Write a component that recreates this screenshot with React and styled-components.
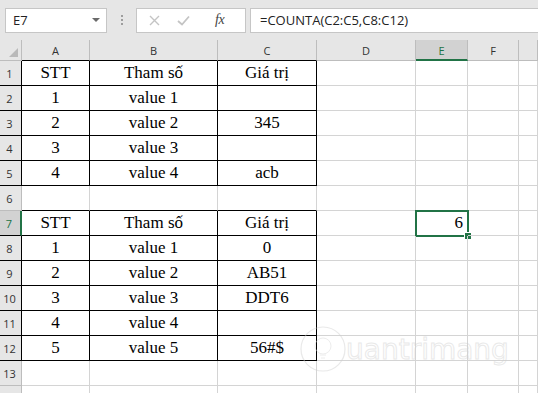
import React from 'react';
import styled, { createGlobalStyle } from 'styled-components';

const GlobalStyle = createGlobalStyle`
  html, body {
    margin: 0;
    padding: 0;
    background: #ffffff;
    overflow: hidden;
  }
  * { box-sizing: border-box; }
`;

const green = '#217346';
const gridLine = '#d4d4d4';

const Window = styled.div`
  position: relative;
  width: 538px;
  height: 393px;
  overflow: hidden;
  background: #ffffff;
  font-family: "Open Sans", "Liberation Sans", sans-serif;
`;

const Toolbar = styled.div`
  display: flex;
  align-items: center;
  height: 40px;
  padding: 0 0 0 5px;
  background: #e6e6e6;
`;

const NameBox = styled.div`
  display: flex;
  align-items: center;
  justify-content: space-between;
  width: 102px;
  height: 25px;
  padding: 0 6px 0 7px;
  background: #ffffff;
  border: 1px solid #c6c6c6;
  font-size: 13px;
  color: #222;
`;

const Caret = styled.span`
  width: 0;
  height: 0;
  border-left: 4px solid transparent;
  border-right: 4px solid transparent;
  border-top: 4px solid #6a6a6a;
`;

const Grip = styled.div`
  display: flex;
  flex-direction: column;
  gap: 2px;
  margin: 0 13px 0 14px;
  span {
    width: 2px;
    height: 2px;
    background: #9d9d9d;
  }
`;

const FxBox = styled.div`
  display: flex;
  align-items: center;
  width: 110px;
  height: 25px;
  padding: 0 0 0 12px;
  background: #ffffff;
  border: 1px solid #c6c6c6;
  gap: 17px;
`;

const FxLabel = styled.span`
  font-family: "Liberation Serif", serif;
  font-style: italic;
  font-size: 14px;
  color: #444;
  margin-left: 8px;
  letter-spacing: -0.5px;
`;

const FormulaInput = styled.div`
  flex: 1;
  display: flex;
  align-items: center;
  height: 25px;
  margin-left: 4px;
  padding-left: 9px;
  background: #ffffff;
  border: 1px solid #c6c6c6;
  border-right: none;
  font-size: 13px;
  color: #222;
`;

const Sheet = styled.div`
  display: grid;
  grid-template-columns: 22px 68px 128px 99px 99px 52px 51px 19px;
  grid-auto-rows: 25px;
  grid-template-rows: 21px;
`;

const ColHead = styled.div`
  display: flex;
  align-items: center;
  justify-content: center;
  background: ${p => (p.$active ? '#d2d2d2' : '#e6e6e6')};
  border-right: 1px solid #bdbdbd;
  border-bottom: ${p => (p.$active ? `2px solid ${green}` : `1px solid ${p.$dark ? '#000' : '#bdbdbd'}`)};
  font-size: 11px;
  color: ${p => (p.$active ? green : '#333')};
  padding-top: ${p => (p.$active ? '1px' : '0')};
`;

const Corner = styled.div`
  position: relative;
  background: #e6e6e6;
  border-right: 1px solid #bdbdbd;
  border-bottom: 1px solid #bdbdbd;
  &::after {
    content: '';
    position: absolute;
    right: 3px;
    bottom: 3px;
    width: 0;
    height: 0;
    border-left: 9px solid transparent;
    border-bottom: 9px solid #b9b9b9;
  }
`;

const RowHead = styled.div`
  display: flex;
  align-items: flex-end;
  justify-content: center;
  padding-bottom: 4px;
  padding-right: 2px;
  background: ${p => (p.$active ? '#d2d2d2' : '#e6e6e6')};
  border-right: ${p => (p.$active ? `2px solid ${green}` : `1px solid ${p.$dark ? '#000' : '#bdbdbd'}`)};
  border-bottom: 1px solid ${p => (p.$dark ? '#000' : '#bdbdbd')};
  font-size: 11px;
  color: ${p => (p.$active ? green : '#333')};
`;

const Cell = styled.div`
  position: relative;
  display: flex;
  align-items: flex-end;
  justify-content: ${p => (p.$align === 'right' ? 'flex-end' : 'center')};
  padding: 0 4px 2px 4px;
  border-right: 1px solid ${p => (p.$darkRight ? '#000' : gridLine)};
  border-bottom: 1px solid ${p => (p.$darkBottom ? '#000' : gridLine)};
  font-family: "Liberation Serif", "Times New Roman", serif;
  font-size: 17px;
  line-height: 20px;
  color: #000;
  white-space: nowrap;
`;

const Selection = styled.div`
  position: absolute;
  left: -1px;
  top: -1px;
  width: 54px;
  height: 27px;
  border: 2px solid ${green};
  pointer-events: none;
`;

const FillHandle = styled.span`
  position: absolute;
  right: -5px;
  bottom: -5px;
  width: 8px;
  height: 8px;
  background: ${green};
  border: 1px solid #ffffff;
`;

const Watermark = styled.div`
  position: absolute;
  left: 300px;
  top: 322px;
  display: flex;
  align-items: center;
  opacity: 0.45;
  white-space: nowrap;
  pointer-events: none;
`;

const WatermarkText = styled.span`
  font-family: "DejaVu Sans", sans-serif;
  font-size: 28px;
  color: transparent;
  -webkit-text-stroke: 1px #cfcfcf;
`;

const columns = ['A', 'B', 'C', 'D', 'E', 'F', ''];

const data = {
  1: ['STT', 'Tham số', 'Giá trị'],
  2: ['1', 'value 1', ''],
  3: ['2', 'value 2', '345'],
  4: ['3', 'value 3', ''],
  5: ['4', 'value 4', 'acb'],
  7: ['STT', 'Tham số', 'Giá trị', '', '6'],
  8: ['1', 'value 1', '0'],
  9: ['2', 'value 2', 'AB51'],
  10: ['3', 'value 3', 'DDT6'],
  11: ['4', 'value 4', ''],
  12: ['5', 'value 5', '56#$'],
};

const inTable = (r, c) => c <= 2 && ((r >= 1 && r <= 5) || (r >= 7 && r <= 12));

const rows = Array.from({ length: 14 }, (_, i) => i + 1);

const CancelIcon = () => (
  <svg width="11" height="11" viewBox="0 0 11 11">
    <path d="M1 1 L10 10 M10 1 L1 10" stroke="#c4c4c4" strokeWidth="1.4" fill="none" />
  </svg>
);

const CheckIcon = () => (
  <svg width="13" height="11" viewBox="0 0 13 11">
    <path d="M1 6 L5 9.5 L12 1.5" stroke="#c4c4c4" strokeWidth="1.8" fill="none" />
  </svg>
);

export default function App() {
  return (
    <Window>
      <GlobalStyle />
      <Toolbar>
        <NameBox>
          E7
          <Caret />
        </NameBox>
        <Grip>
          <span />
          <span />
          <span />
        </Grip>
        <FxBox>
          <CancelIcon />
          <CheckIcon />
          <FxLabel>fx</FxLabel>
        </FxBox>
        <FormulaInput>=COUNTA(C2:C5,C8:C12)</FormulaInput>
      </Toolbar>

      <Sheet>
        <Corner />
        {columns.map((col, c) => (
          <ColHead key={c} $active={col === 'E'} $dark={inTable(1, c)}>
            {col}
          </ColHead>
        ))}

        {rows.map(r => (
          <React.Fragment key={r}>
            <RowHead $active={r === 7} $dark={inTable(r, 0)}>
              {r < 14 ? r : ''}
            </RowHead>
            {columns.map((col, c) => {
              const value = (data[r] && data[r][c]) || '';
              const selected = r === 7 && col === 'E';
              return (
                <Cell
                  key={c}
                  $align={selected ? 'right' : 'center'}
                  $darkRight={inTable(r, c)}
                  $darkBottom={inTable(r, c) || inTable(r + 1, c)}
                >
                  {value}
                  {selected && (
                    <Selection>
                      <FillHandle />
                    </Selection>
                  )}
                </Cell>
              );
            })}
          </React.Fragment>
        ))}
      </Sheet>

      <Watermark>
        <svg width="46" height="54" viewBox="0 0 46 54">
          <circle cx="23" cy="27" r="22" stroke="#cfcfcf" strokeWidth="1.2" fill="none" />
          <circle cx="23" cy="24" r="8" stroke="#d8d8d8" strokeWidth="1" fill="none" />
          <path d="M20 33 H26 M21 36 H25" stroke="#d8d8d8" strokeWidth="1" />
        </svg>
        <WatermarkText>uantrimang</WatermarkText>
      </Watermark>
    </Window>
  );
}
